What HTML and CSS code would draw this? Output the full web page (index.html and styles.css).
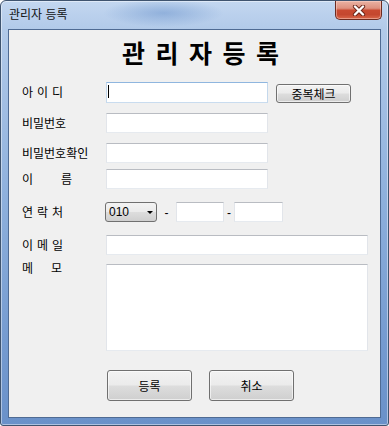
FILE: index.html
```html
<!DOCTYPE html>
<html lang="ko">
<head>
  <meta charset="UTF-8" />
  <title>관리자 등록</title>
  <link rel="stylesheet" href="styles.css">
</head>
<body>
  <div class="window">
    <!-- 타이틀바 -->
    <div class="titlebar">
      <span class="title">관리자 등록</span>
      <button type="button" class="close-btn">
        <svg width="14" height="11" viewBox="0 0 14 11">
          <path d="M3 1.5 L11 9.5 M11 1.5 L3 9.5" stroke="#6a2418" stroke-width="4.2" stroke-linecap="round" fill="none" />
          <path d="M3 1.5 L11 9.5 M11 1.5 L3 9.5" stroke="#ffffff" stroke-width="2.4" stroke-linecap="round" fill="none" />
        </svg>
      </button>
    </div>

    <div class="client">
      <h1 class="heading">관리자등록</h1>

      <form class="reg-form">
        <!-- 아이디 -->
        <label class="label sp4">아이디</label>
        <div class="field">
          <span class="caret-wrap"><input type="text" class="textbox focused w162 tall" /></span>
          <button type="button" class="btn btn-small">중복체크</button>
        </div>

        <!-- 비밀번호 -->
        <label class="label">비밀번호</label>
        <div class="field"><input type="password" class="textbox w162" /></div>

        <!-- 비밀번호확인 -->
        <label class="label">비밀번호확인</label>
        <div class="field"><input type="password" class="textbox w162" /></div>

        <!-- 이름 -->
        <label class="label sp28">이름</label>
        <div class="field"><input type="text" class="textbox w162" /></div>

        <!-- 연락처 -->
        <label class="label sp4">연락처</label>
        <div class="field">
          <span class="combo">
            <select class="combo-select">
              <option>010</option>
              <option>011</option>
              <option>016</option>
              <option>017</option>
            </select>
          </span>
          <span class="dash dash-wide">-</span>
          <input type="text" class="textbox w48" />
          <span class="dash">-</span>
          <input type="text" class="textbox w49" />
        </div>

        <!-- 이메일 -->
        <label class="label sp4">이메일</label>
        <div class="field"><input type="text" class="textbox w262" /></div>

        <!-- 메모 -->
        <label class="label label-top sp18">메모</label>
        <div class="field"><textarea class="textbox memo"></textarea></div>
      </form>

      <div class="actions">
        <button type="button" class="btn btn-big">등록</button>
        <button type="button" class="btn btn-big">취소</button>
      </div>
    </div>
  </div>
</body>
</html>
```

FILE: styles.css
```css
body {
  margin: 0;
  font-family: "Noto Sans CJK KR", "Liberation Sans", sans-serif;
  font-size: 12px;
  color: #000;
  background: #fff;
}

/* 창 테두리 */
.window {
  width: 389px;
  height: 426px;
  box-sizing: border-box;
  border: 1px solid #3f546f;
  border-radius: 6px 6px 3px 3px;
  padding: 0 7px 7px 7px;
  background:
    radial-gradient(ellipse 60px 14px at 42% 12px, rgba(110, 150, 205, 0.55), rgba(110, 150, 205, 0)),
    linear-gradient(to bottom, #c3d7f0 0, #b2cae9 28px, #8fb1dd 45%, #759bd0 80%, #6a91c9 100%);
  box-shadow: inset 0 0 0 1px rgba(255, 255, 255, 0.45);
}

.titlebar {
  height: 28px;
  display: flex;
  justify-content: space-between;
  align-items: flex-start;
}
.title {
  padding: 6px 0 0 1px;
  line-height: 14px;
  font-size: 12px;
  color: #111;
}

/* 닫기 버튼 */
.close-btn {
  width: 47px;
  height: 19px;
  margin-right: -1px;
  padding: 0;
  border: 1px solid #6d2b20;
  border-top: none;
  border-radius: 0 0 5px 5px;
  background: linear-gradient(to bottom, #eab2a3 0, #de917f 40%, #c94a31 52%, #c4472f 75%, #d9674a 100%);
  box-shadow: inset 0 0 0 1px rgba(255, 220, 210, 0.45);
  display: flex;
  align-items: center;
  justify-content: center;
}
.close-btn svg {
  display: block;
}

/* 클라이언트 영역 */
.client {
  height: 389px;
  box-sizing: border-box;
  border: 1px solid #4f6b93;
  background: #f0f0f0;
  padding-top: 8px;
}

.heading {
  margin: 0;
  padding-left: 113px;
  font-size: 25px;
  line-height: 28px;
  font-weight: 700;
  letter-spacing: 10.5px;
}

/* 입력 폼 */
.reg-form {
  display: grid;
  grid-template-columns: 84px auto;
  grid-template-rows: 31px 30px 26px 33px 33px 29px 87px;
  margin-top: 16px;
  padding-left: 13px;
}
.label {
  line-height: 20px;
  height: 20px;
  white-space: nowrap;
}
.label-top {
  line-height: 14px;
  margin-top: -3px;
}
.sp4 { letter-spacing: 4px; }
.sp18 { letter-spacing: 18px; }
.sp28 { letter-spacing: 28px; }

.field {
  display: flex;
  align-items: flex-start;
}

.textbox {
  box-sizing: border-box;
  height: 20px;
  margin: 0;
  padding: 0 2px;
  border: 1px solid;
  border-color: #b9bcc2 #e2e5ea #e6eaef #e2e5ea;
  background: #fff;
  font-family: "Noto Sans CJK KR", sans-serif;
  font-size: 12px;
  outline: none;
}
.textbox.focused {
  border-color: #8fb6df #c4d8ec #c9dcef #c4d8ec;
}
.tall { height: 21px; }
.w162 { width: 162px; }
.w48 { width: 48px; }
.w49 { width: 49px; }
.w262 { width: 262px; }
.memo {
  width: 262px;
  height: 87px;
  resize: none;
}

/* 커서 */
.caret-wrap {
  position: relative;
  display: block;
}
.caret-wrap::after {
  content: "";
  position: absolute;
  left: 2px;
  top: 3px;
  width: 1px;
  height: 13px;
  background: #000;
}

/* 콤보박스 */
.combo {
  position: relative;
  display: block;
  margin-left: -1px;
}
.combo-select {
  appearance: none;
  -webkit-appearance: none;
  width: 52px;
  height: 20px;
  margin: 0;
  padding: 0 0 0 3px;
  border: 1px solid #707070;
  border-radius: 3px;
  background: linear-gradient(to bottom, #f3f3f3 0, #ebebeb 48%, #dddddd 52%, #cfcfcf 100%);
  font-family: "Liberation Sans", sans-serif;
  font-size: 12px;
  color: #000;
  outline: none;
}
.combo::after {
  content: "";
  position: absolute;
  left: 42px;
  top: 9px;
  border-left: 3px solid transparent;
  border-right: 3px solid transparent;
  border-top: 3px solid #000;
  pointer-events: none;
}

.dash {
  width: 10px;
  line-height: 22px;
  text-align: center;
  font-family: "Liberation Sans", sans-serif;
  font-size: 12px;
}
.dash-wide {
  width: 19px;
}

/* 버튼 */
.btn {
  box-sizing: border-box;
  margin: 0;
  padding: 0;
  border: 1px solid #707070;
  border-radius: 3px;
  background: linear-gradient(to bottom, #f2f2f2 0, #ebebeb 48%, #dddddd 52%, #cfcfcf 100%);
  box-shadow: inset 0 0 0 1px rgba(255, 255, 255, 0.6);
  font-family: "Noto Sans CJK KR", sans-serif;
  font-size: 12px;
  color: #000;
  cursor: pointer;
}
.btn-small {
  width: 75px;
  height: 19px;
  margin-top: 2px;
  margin-left: 8px;
  line-height: 16px;
}
.btn-big {
  width: 85px;
  height: 31px;
}

.actions {
  display: flex;
  gap: 17px;
  margin-top: 19px;
  padding-left: 98px;
}
```
